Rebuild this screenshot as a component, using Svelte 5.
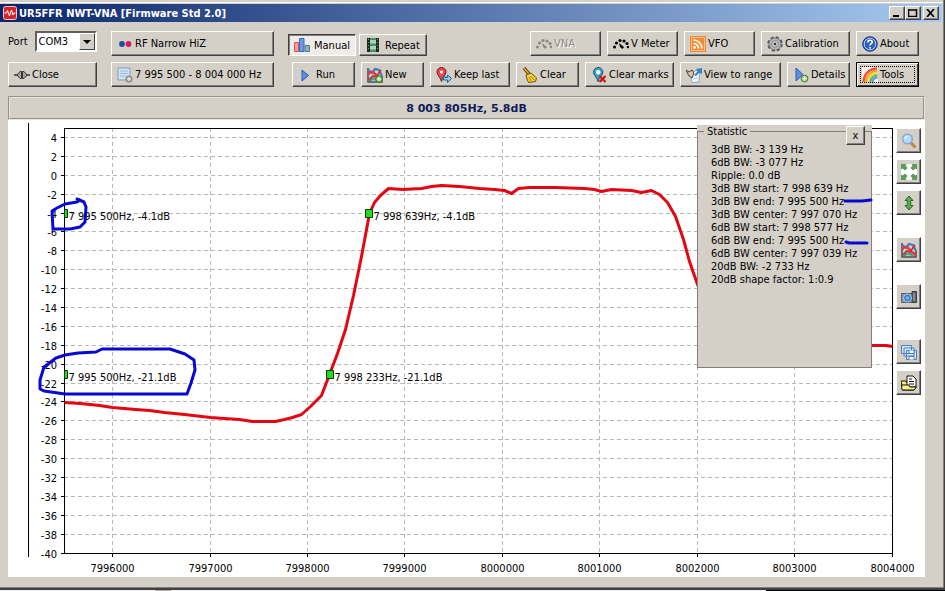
<script>
  let port = $state('COM3');
  let mode = $state('manual');
  let showStats = $state(true);
  let chartWidth = $state(888);

  const topDb = 5;
  const bottomDb = -40;
  const startKhz = 7995.5;
  const spanKhz = 8.5;

  const yTicks = Array.from({ length: 23 }, (_, i) => 4 - i * 2);
  const xTicks = Array.from({ length: 9 }, (_, i) => 7996 + i);

  const marks = [
    { khz: 7995.5, db: -4.1, label: '7 995 500Hz, -4.1dB' },
    { khz: 7998.639, db: -4.1, label: '7 998 639Hz, -4.1dB' },
    { khz: 7995.5, db: -21.1, label: '7 995 500Hz, -21.1dB' },
    { khz: 7998.233, db: -21.1, label: '7 998 233Hz, -21.1dB' },
  ];

  // kHz above the sweep start, level in dB
  const sweep = [
    [0, -24.1], [0.17, -24.2], [0.36, -24.4], [0.5, -24.6], [0.73, -24.8], [0.88, -24.9],
    [1.03, -25.1], [1.24, -25.3], [1.5, -25.6], [1.65, -25.8], [1.8, -25.9], [1.93, -26.1],
    [2.06, -26.1], [2.17, -26.1], [2.26, -25.9], [2.35, -25.7], [2.44, -25.3], [2.53, -24.5],
    [2.64, -23.3], [2.73, -21.1], [2.81, -18.9], [2.89, -16.3], [2.97, -12.7], [3.05, -8.6],
    [3.14, -4.1], [3.19, -2.9], [3.25, -2.1], [3.33, -1.4], [3.47, -1.5], [3.67, -1.4],
    [3.77, -1.2], [3.88, -1.1], [4.06, -1.2], [4.27, -1.4], [4.42, -1.5], [4.52, -1.6],
    [4.59, -1.9], [4.67, -1.4], [4.78, -1.3], [5.05, -1.3], [5.34, -1.4], [5.45, -1.5],
    [5.52, -1.7], [5.62, -1.5], [5.83, -1.6], [5.93, -1.8], [6.03, -1.6], [6.11, -2.0],
    [6.2, -2.9], [6.28, -4.4], [6.36, -6.8], [6.42, -9.1], [6.5, -11.6], [6.7, -15.5],
    [7.2, -17.4], [8.3, -18], [8.44, -18], [8.5, -18.1],
  ];

  const stats = [
    { text: '3dB BW: -3 139 Hz' },
    { text: '6dB BW: -3 077 Hz' },
    { text: 'Ripple: 0.0 dB' },
    { text: '3dB BW start: 7 998 639 Hz' },
    { text: '3dB BW end: 7 995 500 Hz', pen: 'M0 6 H17 L26 5' },
    { text: '3dB BW center: 7 997 070 Hz' },
    { text: '6dB BW start: 7 998 577 Hz' },
    { text: '6dB BW end: 7 995 500 Hz', pen: 'M1 8 L4 9 H22' },
    { text: '6dB BW center: 7 997 039 Hz' },
    { text: '20dB BW: -2 733 Hz' },
    { text: '20dB shape factor: 1:0.9' },
  ];

  const plotLeft = 56;
  let plotRight = $derived(chartWidth - 4);
  let curve = $derived(sweep.map(([k, db]) => `${x(startKhz + k)},${y(db)}`).join(' '));

  function x(khz) {
    return Math.floor(plotLeft + ((khz - startKhz) / spanKhz) * (plotRight - plotLeft)) + 0.5;
  }

  function y(db) {
    return Math.floor(8 + ((topDb - db) / (topDb - bottomDb)) * 425) + 0.5;
  }
</script>

{#snippet icon(name)}
  <svg class="icon" viewBox="0 0 16 16" width="16" height="16" aria-hidden="true">
    {#if name === 'filter'}
      <circle cx="5" cy="8" r="2.9" fill="#1b4f9c" />
      <circle cx="11.500" cy="8" r="2.9" fill="#d81b60" />
    {:else if name === 'plug'}
      <path d="M0 8h4M12 8h4" stroke="#333" stroke-width="1.500" />
      <path d="M3 8l3-3.500h1.500v7H6zM13 8l-3-3.500H8.500v7H10z" fill="#aaa59a" stroke="#333" />
    {:else if name === 'range'}
      <path d="M1 1h12v12H1z" fill="#cfe3f5" stroke="#7c9fc4" />
      <path d="M3 4h8M3 6.500h8M3 9h6" stroke="#9dbbd8" />
      <circle cx="12" cy="12" r="2.800" fill="#ddd" stroke="#888" stroke-width="1.500" />
    {:else if name === 'bars'}
      <path d="M.5 5.500h4v9h-4z" fill="#ff9c9c" stroke="#e05050" />
      <path d="M5.500 1.500h4.500v13H5.500z" fill="#6d9be8" stroke="#3567c4" />
      <path d="M11 8.500h4.500v6H11z" fill="#8fb5ae" stroke="#4a7f9a" />
    {:else if name === 'film'}
      <path d="M2 1h3v14H2zM11 1h3v14h-3z" fill="#1d2a22" />
      <path d="M5 1h6v14H5z" fill="#4f8b69" />
      <path d="M5 3h6v3.500H5zM5 9h6v3.500H5z" fill="#a5d8b4" />
      <path d="M3.500 2v12M12.500 2v12" stroke="#7f9186" stroke-dasharray="1 2" />
    {:else if name === 'meter'}
      <g fill="currentColor">
        <circle cx="1.500" cy="11" r="1.500" /><circle cx="3.500" cy="7" r="1.600" />
        <circle cx="7" cy="4.500" r="1.600" /><circle cx="11" cy="5" r="1.600" />
        <circle cx="14" cy="7.500" r="1.600" /><circle cx="15" cy="11" r="1.300" />
        <path d="M6 7l5 4-1.500 2L7 11z" />
      </g>
    {:else if name === 'feed'}
      <path d="M0 0h16v16H0z" fill="#f58a32" />
      <path d="M1.500 1.500h13v13h-13z" fill="none" stroke="#fbc08c" />
      <circle cx="4.500" cy="11.500" r="1.400" fill="#fff" />
      <path d="M3.500 7.500a5 5 0 0 1 5 5M3.500 4a8.500 8.500 0 0 1 8.500 8.500" fill="none" stroke="#fff" stroke-width="1.700" />
    {:else if name === 'gear'}
      <circle cx="8" cy="8" r="6.500" fill="none" stroke="#555" stroke-width="2.500" stroke-dasharray="3 2.100" />
      <circle cx="8" cy="8" r="6" fill="#b4b4b4" stroke="#777" />
      <circle cx="8" cy="8" r="3.300" fill="#d2d2d2" stroke="#888" />
      <circle cx="8" cy="8" r="1.300" fill="#333" />
    {:else if name === 'help'}
      <circle cx="8" cy="8" r="7.300" fill="#2c5fc2" stroke="#173781" />
      <circle cx="8" cy="8" r="5.800" fill="none" stroke="#b9cff5" />
      <path d="M5.800 6.500c0-3 4.500-3 4.500-.4C10.300 7.800 8 7.600 8 9.500M8 11v1.500" fill="none" stroke="#fff" stroke-width="1.600" />
    {:else if name === 'run'}
      <path d="M4 3l6.500 5.500L4 14z" fill="#5c8ee6" stroke="#2c5bb8" />
    {:else if name === 'plot' || name === 'new'}
      <path d="M1 1v14h14V9" fill="none" stroke="#4a4a58" stroke-width="1.500" />
      <path d="M2 14v-4l4-2 4 3 4-1v4z" fill="#8fc0ea" />
      <path d="M1 3l4 3 3-4 4 1 3 6" fill="none" stroke="#3c7cc8" stroke-width="2.200" />
      <path d="M1 8c2-4 5-4 7-1s4 4 7 6" fill="none" stroke="#e03a3a" stroke-width="2.500" />
      <path d="M2 13l4-4 3 1 5-7" fill="none" stroke="#d02c34" stroke-width="1.800" />
      <path d="M3 14c2-3 6-3 9 0" fill="none" stroke="#3d9a4c" stroke-width="1.500" />
      {#if name === 'new'}
        <circle cx="12" cy="12" r="3.300" fill="#8ccc68" stroke="#387a28" />
        <path d="M12 10v4M10 12h4" stroke="#fff" />
      {/if}
    {:else if name === 'keep'}
      <path d="M5.500 14.500C5 11 1 8 1 5a4.500 4.500 0 0 1 9 0c0 3-4 5-4.500 9.500z" fill="#f04848" stroke="#6d1717" />
      <circle cx="5.500" cy="5" r="1.600" fill="#fff" />
      <path d="M7.500 9v4h4v2.500l4-4-4-3.500v2.500H9V9z" fill="#8fd0f4" stroke="#236191" />
    {:else if name === 'broom'}
      <path d="M2 1l5 6" stroke="#5c3b0c" stroke-width="3.500" />
      <path d="M2 1l5 6" stroke="#e7a936" stroke-width="1.500" />
      <path d="M4 8l5-2 5.500 5-1 3.500-7 1L5 12z" fill="#f8cf35" stroke="#6b5209" />
      <path d="M7 10l2 4M9 9l3 4" stroke="#a67d0d" />
    {:else if name === 'unmark'}
      <path d="M7 14.500C6 10 2.500 8 2.500 5.200a4.700 4.700 0 0 1 9.400 0C11.900 8 8 10 7 14.500z" fill="#36a5cf" stroke="#164e70" />
      <circle cx="7.200" cy="5.300" r="2.200" fill="#fff" />
      <path d="M8.500 9l6 6M14.500 9l-6 6" stroke="#c91818" stroke-width="2.400" />
    {:else if name === 'view'}
      <path d="M4 5l10-2-1 12-7 .5z" fill="#f5fbff" stroke="#86a5ba" />
      <path d="M0 3l3 2 3-2 2 3-2 5-3-2z" fill="#d9c4a4" stroke="#4c4034" />
      <path d="M8 8l3.500-3.500L10 2l6-1v6l-2.500-1.500L10 9z" fill="#2d86cb" />
      <path d="M7 12l5-1" stroke="#9cc4de" />
    {:else if name === 'details'}
      <path d="M3 1l7 6.500L3 14z" fill="#5c8ee6" stroke="#2c5bb8" />
      <circle cx="11.500" cy="11.500" r="3.400" fill="#a8d888" stroke="#467a2d" />
      <path d="M11.500 9.500v4M9.500 11.500h4" stroke="#fff" />
    {:else if name === 'rainbow'}
      <path d="M0 0h16v16H0z" fill="#f7f2ec" />
      <g fill="none" stroke-width="2.300">
        <path d="M1.500 15C2 7 7 2 15 1.500" stroke="#f04e37" />
        <path d="M3.700 15.500C4 9 9 4 15.500 3.700" stroke="#ff9b2f" />
        <path d="M6 15.500C6 10 10 6 15.500 6" stroke="#f6d745" />
        <path d="M8.200 15.500c0-4 3-7 7.300-7.300" stroke="#5ebb63" />
        <path d="M10.400 15.500c0-2.500 2-5 5.100-5.100" stroke="#5c93de" />
      </g>
    {:else if name === 'zoom'}
      <path d="M9.500 9.500l5 5" stroke="#c98236" stroke-width="3" />
      <circle cx="6.500" cy="6" r="4.800" fill="#b7dcf7" stroke="#7fa9d0" stroke-width="1.500" />
      <path d="M4 6a2.500 2.500 0 0 1 2.500-2.500" stroke="#fff" fill="none" />
    {:else if name === 'fit'}
      <path d="M0 0h16v16H0z" fill="#fff" />
      <path d="M0 0h5.500L4.500 1.500 6.500 4 4 6.500 1.500 4.500 0 5.500zM16 0h-5.500l1 1.500L9.500 4 12 6.500l2.500-2L16 5.500zM0 16h5.500l-1-1.500 2-2.500L4 9.500l-2.500 2-1.500-1zM16 16h-5.500l1-1.500-2-2.500L12 9.500l2.500 2 1.500-1z" fill="#5a9c58" />
    {:else if name === 'height'}
      <path d="M8 1l4 4.500h-2.300v5H12L8 15l-4-4.500h2.300v-5H4z" fill="#58ad51" stroke="#256b28" />
    {:else if name === 'camera'}
      <path d="M.5 4.500h11v9H.5z" fill="#8d9399" stroke="#5a6168" />
      <path d="M11 2.500h4.500v11H11z" fill="#5c6064" stroke="#3d4145" />
      <path d="M13 4v8" stroke="#b9bdc0" />
      <circle cx="6.500" cy="9" r="4" fill="#3d7fc4" stroke="#a9cdf0" />
      <circle cx="6.500" cy="9" r="1.800" fill="#79b5ec" />
    {:else if name === 'saveall'}
      <g fill="#d7e7fb" stroke="#4d7fc4">
        <path d="M.5 1.500h10v8H.5zM3 4h10v8H3zM5.500 6.500h10v9h-10z" />
        <path d="M8 6.500v3h5v-3M8 15.500v-3h5v3" fill="#fff" />
      </g>
    {:else if name === 'open'}
      <path d="M0 6h5l1 2h7v7H2z" fill="#ffe873" stroke="#111" />
      <path d="M6 1h6l3 3v8H6z" fill="#fff" stroke="#111" />
      <path d="M8 4h3M8 6.500h5M8 9h5" stroke="#111" />
      <path d="M1 15l-.5-5H8l1 2h6.500L13 15z" fill="#fff08a" stroke="#111" />
    {/if}
  </svg>
{/snippet}

{#snippet tool(name, label, size)}
  <button class="btn {size}">{@render icon(name)}<span>{label}</span></button>
{/snippet}

<div class="window">
  <header class="titlebar">
    <svg class="logo" viewBox="0 0 14 14" width="14" height="14" aria-hidden="true">
      <rect x="0.500" y="0.500" width="13" height="13" rx="2" fill="#d8232a" stroke="#f6c8c8" />
      <path d="M1.500 7h2l1-2.500L6.500 10l2-6 1.500 5 1-2h1.500" fill="none" stroke="#fff" />
    </svg>
    <h1>UR5FFR NWT-VNA [Firmware Std 2.0]</h1>
    <div class="captions">
      <button aria-label="Minimize"><svg viewBox="0 0 10 8" width="10" height="8"><path d="M1 7h6" stroke="#000" stroke-width="2" /></svg></button>
      <button aria-label="Maximize"><svg viewBox="0 0 10 8" width="10" height="8"><path d="M.5 0v7.500h8V0M0 1h9" fill="none" stroke="#000" stroke-width="1.500" /></svg></button>
      <button class="close" aria-label="Close window"><svg viewBox="0 0 10 8" width="10" height="8"><path d="M1 0l7 8M8 0L1 8" stroke="#000" stroke-width="1.700" /></svg></button>
    </div>
  </header>

  <div class="toolbar">
    <div class="row">
      <div class="port">
        <label for="port">Port</label>
        <div class="combo">
          <select id="port" bind:value={port}>
            <option>COM3</option>
            <option>COM4</option>
          </select>
          <span class="arrow"><i></i></span>
        </div>
      </div>
      {@render tool('filter', 'RF Narrow HiZ', 'wide')}
      <div class="modes">
        <button class="btn mode" class:pressed={mode === 'manual'} onclick={() => (mode = 'manual')}>
          {@render icon('bars')}<span>Manual</span>
        </button>
        <button class="btn mode" class:pressed={mode === 'repeat'} onclick={() => (mode = 'repeat')}>
          {@render icon('film')}<span>Repeat</span>
        </button>
      </div>
      <div class="group">
        <button class="btn medium" disabled>{@render icon('meter')}<span>VNA</span></button>
        {@render tool('meter', 'V Meter', 'medium')}
        {@render tool('feed', 'VFO', 'medium')}
        {@render tool('gear', 'Calibration', 'large')}
        {@render tool('help', 'About', 'small')}
      </div>
    </div>

    <div class="row">
      {@render tool('plug', 'Close', 'large')}
      {@render tool('range', '7 995 500 - 8 004 000 Hz', 'wide')}
      <div class="group">
        {@render tool('run', 'Run', 'small')}
        {@render tool('new', 'New', 'small')}
        {@render tool('keep', 'Keep last', 'keep')}
        {@render tool('broom', 'Clear', 'small')}
        {@render tool('unmark', 'Clear marks', 'large')}
        {@render tool('view', 'View to range', 'view')}
        {@render tool('details', 'Details', 'small')}
        {@render tool('rainbow', 'Tools', 'small focused')}
      </div>
    </div>
  </div>

  <main>
    <output class="readout">8 003 805Hz, 5.8dB</output>

    <div class="panel">
      <div class="chart" bind:clientWidth={chartWidth}>
        <svg class="plot" width={chartWidth} height="457" role="img" aria-label="Level in dB against frequency in Hz">
          <path class="axis" d="M20.500 3V437" />
          {#each yTicks as t}
            <path class="grid" d="M{plotLeft} {y(t)}H{plotRight}" />
            <path class="axis" d="M53 {y(t)}h3" />
            <text x="49" y={y(t) + 4} text-anchor="end">{t}</text>
          {/each}
          {#each xTicks as t}
            {#if t < 8004}
              <path class="grid" d="M{x(t)} 8V433" />
            {/if}
            <path class="axis" d="M{x(t)} 433v4" />
            <text x={x(t)} y="452" text-anchor="middle">{t * 1000}</text>
          {/each}
          <rect class="axis" x={plotLeft + 0.5} y="8.500" width={plotRight - plotLeft} height="425" />
          <polyline class="curve" points={curve} />
          {#each marks as m}
            <path class="mark" d="M{Math.max(x(m.khz) - 4, plotLeft + 0.5)} {y(m.db) - 4}H{x(m.khz) + 3}v8H{Math.max(x(m.khz) - 4, plotLeft + 0.5)}z" />
            <text x={x(m.khz) + 4} y={y(m.db) + 6}>{m.label}</text>
          {/each}
          <path class="pen" d="M69 79L76 82L78 87L77 102L72 107L62 109H45L44 91L49 88L57 84L69 82L72 80" />
          <path class="pen" d="M57 235L48 238L36 247L32 260V269L36 271L57 274H179L183 263L187 250L186 240L177 234L162 229H94L88 232L70 233Z" />
        </svg>

        {#if showStats}
          <section class="stats">
            <fieldset>
              <legend>Statistic</legend>
              <ul>
                {#each stats as s}
                  <li>
                    {s.text}
                    {#if s.pen}
                      <svg width="26" height="13" aria-hidden="true"><path class="pen" d={s.pen} /></svg>
                    {/if}
                  </li>
                {/each}
              </ul>
            </fieldset>
            <button class="dismiss" aria-label="Close statistic" onclick={() => (showStats = false)}>x</button>
          </section>
        {/if}
      </div>

      <aside>
        <div class="stack">
          <button class="side" aria-label="Zoom">{@render icon('zoom')}</button>
          <button class="side" aria-label="Fit all">{@render icon('fit')}</button>
          <button class="side" aria-label="Fit height">{@render icon('height')}</button>
        </div>
        <button class="side" aria-label="Plots">{@render icon('plot')}</button>
        <button class="side" aria-label="Screenshot">{@render icon('camera')}</button>
        <div class="stack files">
          <button class="side" aria-label="Save all">{@render icon('saveall')}</button>
          <button class="side" aria-label="Open">{@render icon('open')}</button>
        </div>
      </aside>
    </div>
  </main>
</div>
<div class="behind"><span class="tab"></span><span class="dark"></span></div>

<style>
  :global(body) {
    background: #d4d0c8;
    overflow-x: hidden;
  }

  .window,
  .window button,
  .window select {
    font-family: 'DejaVu Sans Condensed', 'DejaVu Sans', sans-serif;
    font-stretch: condensed;
    font-size: 11px;
    line-height: 13px;
    color: #000;
  }

  .window {
    background: #d4d0c8;
    border-right: 1px solid #404040;
    border-bottom: 2px solid #404040;
    box-shadow: inset -1px -1px #808080;
    padding-top: 4px;
    background-image: linear-gradient(#fff, #fff);
    background-repeat: no-repeat;
    background-size: 100% 1px;
    background-position: 0 2px;
  }

  .titlebar {
    display: flex;
    align-items: center;
    height: 18px;
    margin-right: 2px;
    padding: 0 3px;
    background: linear-gradient(90deg, #0a246a, #a6caf0);
  }

  .titlebar h1 {
    margin: 0 auto 0 2px;
    font-size: 11px;
    font-weight: bold;
    color: #fff;
    white-space: nowrap;
  }

  .captions {
    display: flex;
  }

  .captions button {
    display: flex;
    align-items: center;
    justify-content: center;
    width: 16px;
    height: 14px;
    padding: 0;
  }

  .captions .close {
    margin-left: 2px;
  }

  .window button {
    background: #d4d0c8;
    border: 1px solid;
    border-color: #fff #404040 #404040 #fff;
    box-shadow: inset -1px -1px #808080;
  }

  .toolbar {
    display: flex;
    flex-direction: column;
    gap: 6px;
    padding: 9px 25px 9px 8px;
  }

  .row {
    display: flex;
    gap: 14px;
  }

  .group {
    display: flex;
    gap: 6px;
    margin-left: auto;
  }

  .port {
    display: flex;
    gap: 7px;
    width: 89px;
  }

  .port label {
    margin-top: 4px;
  }

  .combo {
    position: relative;
    flex: 1;
    height: 21px;
  }

  .combo select {
    appearance: none;
    width: 100%;
    height: 21px;
    padding: 0 18px 0 2px;
    background: #fff;
    border: 2px solid;
    border-color: #606060 #fff #fff #606060;
    border-radius: 0;
  }

  .arrow {
    position: absolute;
    top: 2px;
    right: 2px;
    display: flex;
    align-items: center;
    justify-content: center;
    width: 14px;
    height: 15px;
    background: #d4d0c8;
    border: 1px solid;
    border-color: #fff #404040 #404040 #fff;
    pointer-events: none;
  }

  .arrow i {
    border: 4px solid transparent;
    border-top-color: #000;
    border-bottom-width: 0;
  }

  .btn {
    display: flex;
    align-items: center;
    gap: 2px;
    height: 25px;
    padding: 0 0 0 5px;
    white-space: nowrap;
  }

  .icon {
    flex-shrink: 0;
  }

  .small { width: 63px; }
  .medium { width: 71px; }
  .keep { width: 80px; }
  .large { width: 89px; }
  .view { width: 101px; }
  .wide { width: 163px; }

  .window .btn:disabled {
    color: #8c8880;
    text-shadow: 1px 1px #fff;
  }

  .window .focused {
    border-color: #000;
    outline: 1px dotted #000;
    outline-offset: -5px;
    box-shadow: inset 1px 1px #fff, inset -1px -1px #404040;
  }

  .modes {
    display: flex;
    gap: 3px;
    margin-top: 3px;
  }

  .mode {
    gap: 4px;
    width: 68px;
    height: 22px;
    padding-left: 5px;
  }

  .window .pressed {
    background: #efedea;
    border-color: #404040 #fff #fff #404040;
    box-shadow: inset 1px 1px #808080;
  }

  main {
    padding: 0 19px 11px 8px;
  }

  .readout {
    display: flex;
    align-items: center;
    justify-content: center;
    height: 20px;
    border: 2px groove #e8e5df;
    font-family: 'DejaVu Sans', sans-serif;
    font-stretch: normal;
    font-size: 11px;
    font-weight: bold;
    color: #0c1c56;
  }

  .panel {
    display: flex;
    background: #fff;
  }

  .chart {
    position: relative;
    flex: 1;
    min-width: 0;
    height: 457px;
  }

  .plot {
    display: block;
    overflow: visible;
  }

  .axis {
    fill: none;
    stroke: #000;
  }

  .grid {
    stroke: #b8b8b8;
    stroke-dasharray: 4 3;
  }

  .curve {
    fill: none;
    stroke: #e30613;
    stroke-width: 3;
    stroke-linejoin: round;
  }

  .mark {
    fill: #1fdc1f;
    stroke: #003c00;
  }

  .pen {
    fill: none;
    stroke: #0808d0;
    stroke-width: 3;
    stroke-linecap: round;
    stroke-linejoin: round;
  }

  .stats {
    position: absolute;
    top: 5px;
    right: 24px;
    width: 175px;
    background: #d4d0c8;
  }

  .stats fieldset {
    height: 243px;
    margin: 0;
    padding: 0 0 0 13px;
    border: 1px solid #808080;
    box-sizing: border-box;
  }

  .stats legend {
    margin-left: -7px;
    padding: 0 3px;
  }

  .stats ul {
    margin: 5px 0 0;
    padding: 0;
    list-style: none;
  }

  .stats li {
    display: flex;
    height: 13px;
    white-space: nowrap;
  }

  .stats li svg {
    margin-left: auto;
    overflow: visible;
  }

  .window .dismiss {
    position: absolute;
    top: 1px;
    right: 7px;
    width: 19px;
    height: 19px;
    padding: 0;
  }

  aside {
    display: flex;
    flex-direction: column;
    gap: 22px;
    width: 29px;
    padding-top: 8px;
  }

  .stack {
    display: flex;
    flex-direction: column;
    gap: 6px;
  }

  .files {
    margin-top: 8px;
  }

  .side {
    display: flex;
    align-items: center;
    justify-content: center;
    width: 25px;
    height: 25px;
    padding: 0;
    z-index: 1;
  }

  .behind {
    display: flex;
    height: 2px;
    background: #f4f2ee;
  }

  .tab {
    width: 16px;
    margin-left: 155px;
    background: #b0aca4;
  }

  .dark {
    width: 179px;
    margin-left: auto;
    background: #000;
  }
</style>
